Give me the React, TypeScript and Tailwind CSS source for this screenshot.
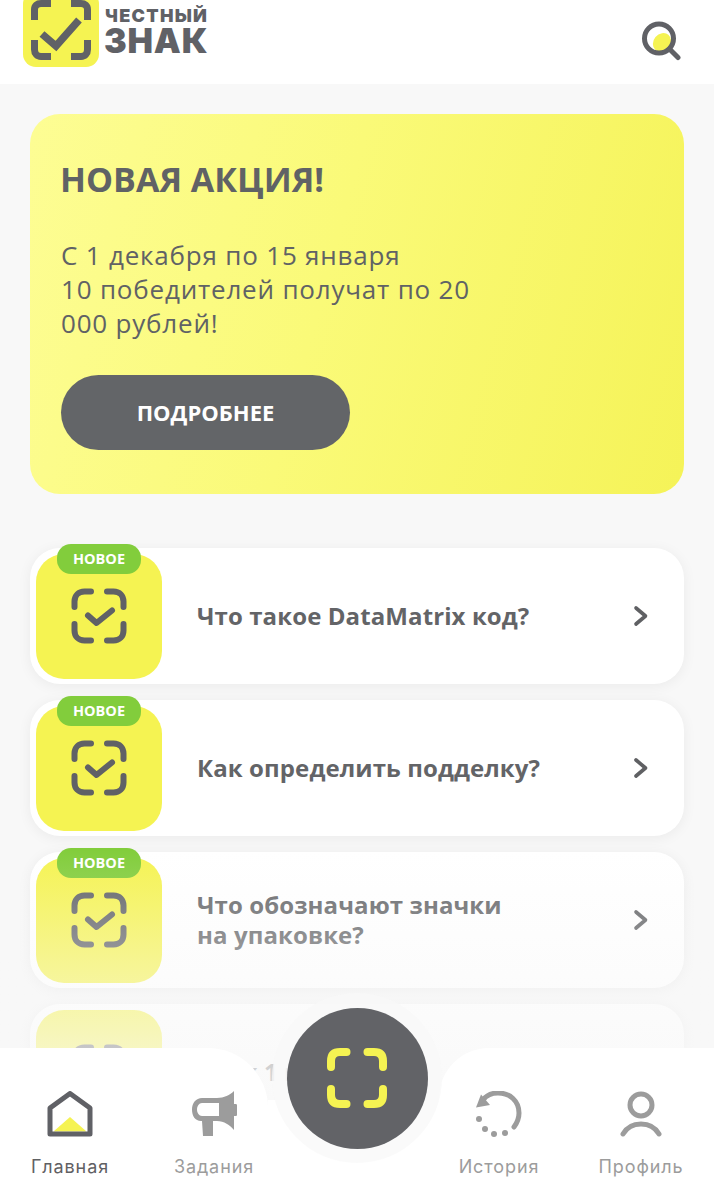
import React from "react";

const font = { fontFamily: '"Open Sans", sans-serif' };

function Scan() {
  return (
    <svg width="56" height="56" viewBox="0 0 56 56" fill="none" stroke="#606166" strokeWidth="6" strokeLinecap="round" strokeLinejoin="round">
      <path d="M3.500 19V13.500C3.500 7.500 7.500 3.500 13.500 3.500H20" />
      <path d="M36 3.500H42.500C48.500 3.500 52.500 7.500 52.500 13.500V19" />
      <path d="M3.500 36V42.500C3.500 48.500 7.500 52.500 13.500 52.500H20" />
      <path d="M36 52.500H42.500C48.500 52.500 52.500 48.500 52.500 42.500V36" />
      <path d="M17 27.500L25.500 35L41 22.500" />
    </svg>
  );
}

function Card({ lines, dim }: { lines: string[]; dim?: boolean }) {
  return (
    <div className="relative flex h-[136px] w-[654px] items-center rounded-[30px] bg-white shadow-[0_2px_14px_rgba(0,0,0,0.06)]">
      <div className="ml-[6px] flex h-[125px] w-[126px] items-center justify-center rounded-[28px] bg-[#f5f352]">
        <Scan />
      </div>
      {!dim && (
        <div className="absolute left-[27px] top-[-4px] flex h-[30px] w-[84px] items-center justify-center rounded-[14px] bg-[#82cd3c] text-[14.5px] font-bold text-white">
          НОВОЕ
        </div>
      )}
      <div className="ml-[35px] flex-1 text-[24px] font-bold leading-[30px] tracking-[0.1px] text-[#636467]">
        {lines.map((l) => (
          <div key={l}>{l}</div>
        ))}
      </div>
      <svg width="16" height="22" viewBox="0 0 16 22" fill="none" stroke="#5f6063" strokeWidth="3.600" strokeLinecap="round" strokeLinejoin="round" className="mr-[35px]">
        <path d="M3 3L12.500 11L3 19" />
      </svg>
    </div>
  );
}

function NavItem({ label, active, children }: { label: string; active?: boolean; children: React.ReactNode }) {
  return (
    <div className="flex w-[100px] flex-col items-center pt-[43px]">
      <div className="flex h-[46px] items-center justify-center">{children}</div>
      <div
        className={`mt-[18px] text-[18px] leading-[24px] tracking-[0.9px] ${active ? "text-[#5f6063]" : "text-[#9c9c9c]"}`}
        style={{ fontFamily: "Inter, sans-serif" }}
      >
        {label}
      </div>
    </div>
  );
}

export default function App() {
  return (
    <div className="relative h-[1200px] w-[714px] overflow-hidden bg-[#f8f8f8]" style={font}>
      <header className="flex h-[84px] items-start justify-between bg-white pl-[23px] pr-[32px]">
        <div className="flex items-start">
          <div className="mt-[-9px] h-[76px] w-[76px] rounded-[13px] bg-[#f5f352]">
            <svg width="76" height="76" viewBox="0 0 76 76" fill="none" stroke="#606166" strokeWidth="7">
              <path d="M11.500 29V18.500C11.500 14.500 14 12.500 18 12.500H28" />
              <path d="M48 12.500H58C62 12.500 64.500 14.500 64.500 18.500V29" />
              <path d="M11.500 49V58.500C11.500 62.500 14 65.500 18 65.500H28" />
              <path d="M48 65.500H58C62 65.500 64.500 62.500 64.500 58.500V49" />
              <path d="M19 43L33 55L56 29" strokeWidth="7.500" />
            </svg>
          </div>
          <div className="ml-[6px] flex flex-col pt-[6px] text-[#606166]" style={{ fontFamily: "Inter, sans-serif" }}>
            <div className="text-[18px] font-black leading-[20px] tracking-[1.300px]">ЧЕСТНЫЙ</div>
            <div className="ml-[-1px] text-[34px] font-black leading-[29px] tracking-[0.800px]">ЗНАК</div>
          </div>
        </div>
        <svg width="40" height="40" viewBox="0 0 40 40" className="mt-[21px]" fill="none">
          <ellipse cx="20" cy="21.500" rx="8.500" ry="10" transform="rotate(40 20 21.500)" fill="#f5f352" />
          <circle cx="17" cy="17.500" r="14.500" stroke="#606166" strokeWidth="5" />
          <path d="M27.500 28L36 36.500" stroke="#606166" strokeWidth="5" strokeLinecap="round" />
        </svg>
      </header>

      <main className="px-[30px] pt-[30px]">
        <section className="h-[380px] w-[654px] rounded-[30px] bg-[linear-gradient(105deg,#fdfd94_0%,#fafa78_45%,#f5f358_100%)] pl-[31px] pt-[42px] text-[#606265]">
          <h1 className="ml-[-1px] text-[34px] font-bold leading-[46px]">НОВАЯ АКЦИЯ!</h1>
          <p className="mt-[36px] text-[26px] leading-[34px] tracking-[0.800px]">
            С 1 декабря по 15 января
            <br />
            10 победителей получат по 20
            <br />
            000 рублей!
          </p>
          <button className="mt-[35px] flex h-[75px] w-[289px] items-center justify-center rounded-full bg-[#636568] text-[22px] font-bold text-white">
            ПОДРОБНЕЕ
          </button>
        </section>

        <div className="mt-[54px] flex flex-col gap-[16px]">
          <Card lines={["Что такое DataMatrix код?"]} />
          <Card lines={["Как определить подделку?"]} />
          <Card lines={["Что обозначают значки", "на упаковке?"]} />
          <Card dim lines={["Срок 1 и 2"]} />
        </div>
      </main>

      <div className="absolute left-0 top-[850px] h-[280px] w-full bg-linear-to-b from-transparent to-[#f8f8f8]/95" />

      <nav className="absolute bottom-0 left-0 flex h-[152px] w-full">
        <div className="flex w-[268px] gap-[44px] rounded-tr-[60px] bg-white pl-[20px]">
          <NavItem label="Главная" active>
            <svg width="46" height="46" viewBox="0 0 46 46" fill="none">
              <path d="M6.500 40.500L23 26L39.500 40.500Z" fill="#f5f352" />
              <path d="M3 17L23 2.500L43 17V43H3Z" stroke="#606166" strokeWidth="5" strokeLinejoin="round" />
            </svg>
          </NavItem>
          <NavItem label="Задания">
            <svg width="46" height="46" viewBox="0 0 46 46" fill="none">
              <path d="M43 0V39C39 34 33 30 26 30H22V45H12L11 30H10C4 30 1 25 1 18.500C1 12 5 7 11 7H26C33 7 39 4 43 0Z" fill="#9c9c9c" />
              <path d="M11 12H28V25H11C8 25 6 22 6 18.500C6 15 8 12 11 12Z" fill="#fff" />
              <path d="M43 13H45C46 13 46 14 46 15V23C46 24 46 25 45 25H43Z" fill="#9c9c9c" />
            </svg>
          </NavItem>
        </div>
        <div className="flex w-[171px] flex-col justify-end">
          <div className="h-[100px] bg-white" />
        </div>
        <div className="flex flex-1 gap-[42px] rounded-tl-[50px] bg-white pl-[10px]">
          <NavItem label="История">
            <svg width="48" height="46" viewBox="0 0 48 46" fill="none">
              <path d="M8 9C12 3.500 18 2 23 2C35 2 44 10 44 22C44 28 42 32 39 36" stroke="#9c9c9c" strokeWidth="5" strokeLinecap="round" />
              <path d="M1 16.500L6 3.500L15 14Z" fill="#9c9c9c" />
              <circle cx="4" cy="28" r="3" fill="#9c9c9c" />
              <circle cx="10" cy="38" r="3" fill="#9c9c9c" />
              <circle cx="19" cy="43" r="3" fill="#9c9c9c" />
              <circle cx="30" cy="42" r="3" fill="#9c9c9c" />
            </svg>
          </NavItem>
          <NavItem label="Профиль">
            <svg width="42" height="46" viewBox="0 0 42 46" fill="none" stroke="#9c9c9c" strokeWidth="5" strokeLinecap="round">
              <circle cx="21" cy="14" r="11" />
              <path d="M3 43C7 36 13 33 21 33C29 33 35 36 39 43" />
            </svg>
          </NavItem>
        </div>
      </nav>

      {/* scan button, floats over the nav */}
      <div className="absolute left-[272px] top-[993px] flex h-[170px] w-[170px] items-center justify-center rounded-full bg-[#f8f8f8]/75">
        <div className="flex h-[141px] w-[141px] items-center justify-center rounded-full bg-[#626367]">
          <svg width="60" height="60" viewBox="0 0 60 60" fill="none" stroke="#f5f352" strokeWidth="8" strokeLinecap="round">
            <path d="M4 19V13C4 7 7 4 13 4H19.500" />
            <path d="M40.500 4H47C53 4 56 7 56 13V19" />
            <path d="M4 41V47C4 53 7 56 13 56H19.500" />
            <path d="M40.500 56H47C53 56 56 53 56 47V41" />
          </svg>
        </div>
      </div>
    </div>
  );
}
